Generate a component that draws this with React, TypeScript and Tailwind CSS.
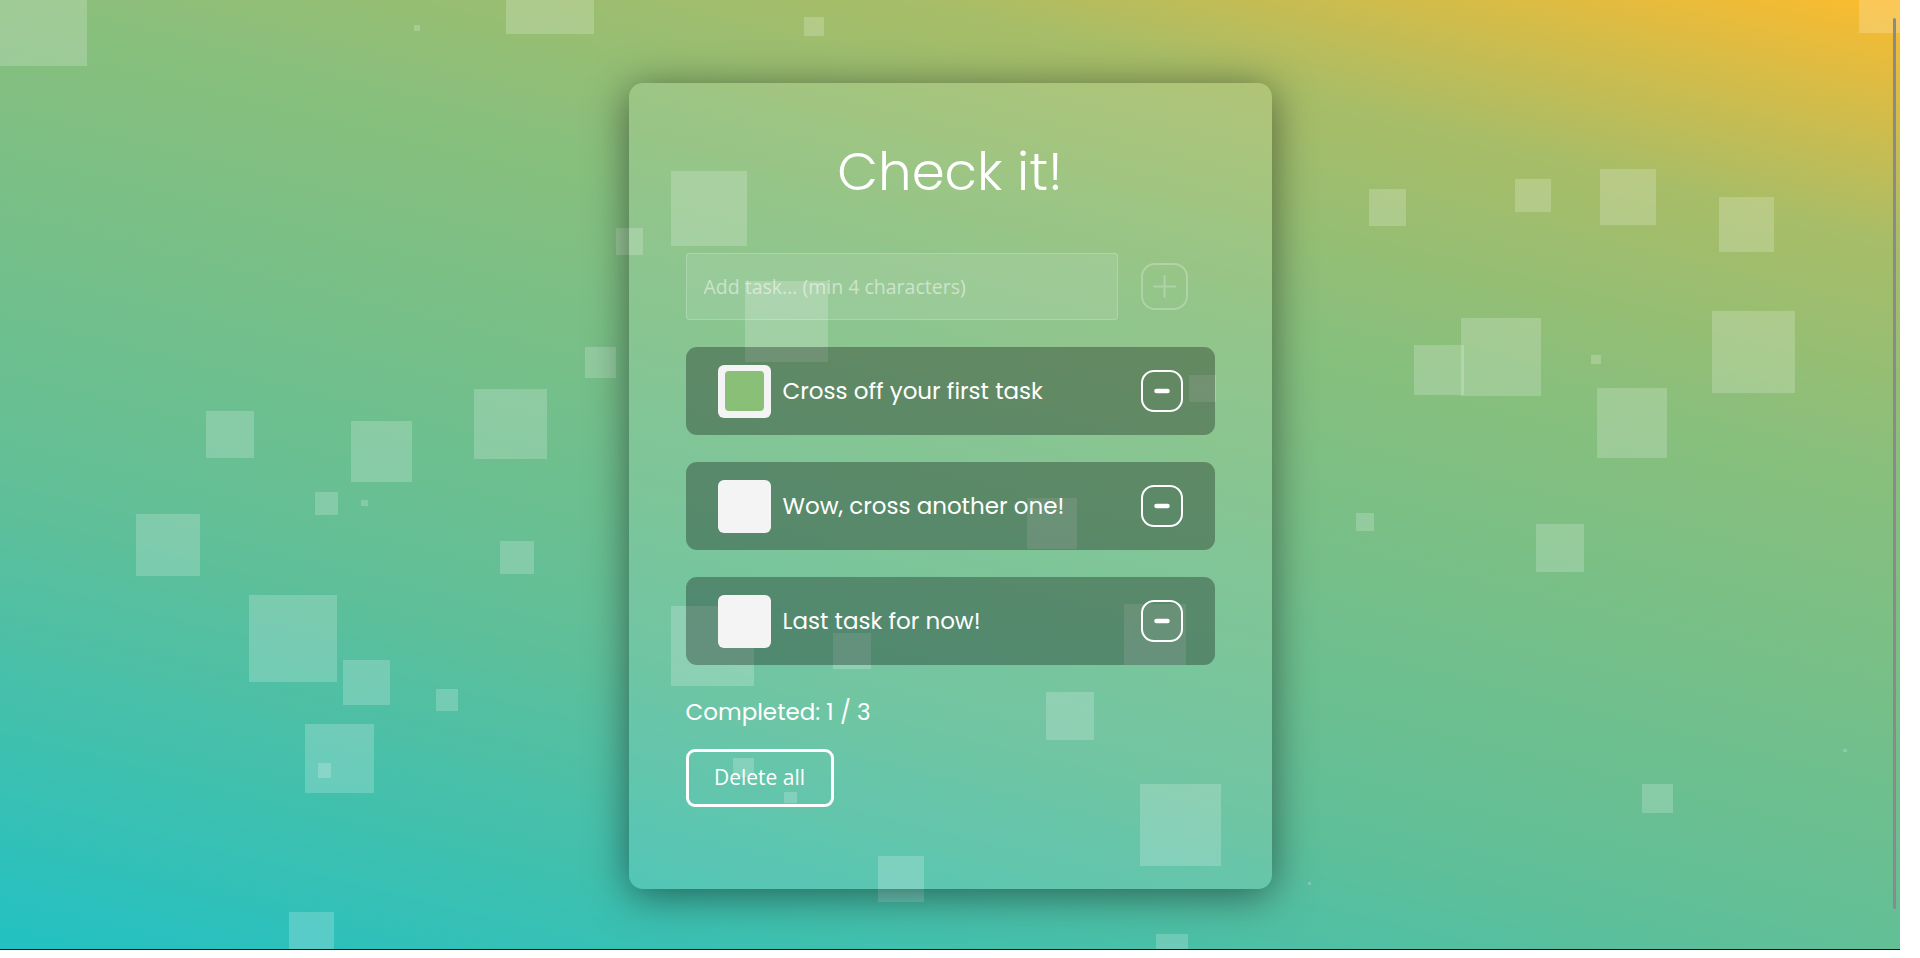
import React, { useState } from "react";

interface Task {
  id: number;
  text: string;
  done: boolean;
}

const initialTasks: Task[] = [
  { id: 1, text: "Cross off your first task", done: true },
  { id: 2, text: "Wow, cross another one!", done: false },
  { id: 3, text: "Last task for now!", done: false },
];

// floating squares in the background: [left, top, width, height]
const squares: [number, number, number, number][] = [
  [0, 0, 87, 66],
  [506, 0, 88, 34],
  [414, 25, 6, 6],
  [804, 17, 20, 19],
  [671, 171, 76, 75],
  [616, 228, 27, 27],
  [745, 281, 83, 81],
  [585, 347, 31, 31],
  [206, 411, 48, 47],
  [351, 421, 61, 61],
  [474, 389, 73, 70],
  [315, 492, 23, 23],
  [361, 500, 7, 6],
  [136, 514, 64, 62],
  [500, 541, 34, 33],
  [249, 595, 88, 87],
  [343, 660, 47, 45],
  [436, 689, 22, 22],
  [305, 724, 69, 69],
  [318, 763, 13, 15],
  [289, 912, 45, 37],
  [671, 606, 83, 80],
  [833, 633, 38, 36],
  [1027, 498, 50, 51],
  [1189, 375, 27, 27],
  [1124, 604, 62, 61],
  [1046, 692, 48, 48],
  [733, 758, 21, 19],
  [784, 792, 13, 11],
  [1140, 784, 81, 82],
  [878, 856, 46, 46],
  [1156, 934, 32, 15],
  [1369, 189, 37, 37],
  [1515, 179, 36, 33],
  [1600, 169, 56, 56],
  [1719, 197, 55, 55],
  [1414, 345, 50, 50],
  [1461, 318, 80, 78],
  [1591, 355, 10, 9],
  [1712, 311, 83, 82],
  [1597, 388, 70, 70],
  [1356, 513, 18, 18],
  [1536, 524, 48, 48],
  [1642, 784, 31, 29],
  [1859, 0, 41, 33],
  [1843, 749, 4, 3],
  [1308, 882, 3, 3],
];

const PlusIcon: React.FC = () => (
  <svg width="47" height="47" viewBox="0 0 47 47" fill="none" stroke="currentColor" strokeWidth="2">
    <rect x="1" y="1" width="45" height="45" rx="13" />
    <path d="M23.5 13v21M13 23.5h21" strokeLinecap="round" />
  </svg>
);

const MinusIcon: React.FC = () => (
  <svg width="42" height="42" viewBox="0 0 42 42" fill="none" stroke="currentColor">
    <rect x="1" y="1" width="40" height="40" rx="12" strokeWidth="2" />
    <path d="M15.5 21h11" strokeWidth="4.5" strokeLinecap="round" />
  </svg>
);

const App: React.FC = () => {
  const [tasks, setTasks] = useState<Task[]>(initialTasks);
  const [draft, setDraft] = useState("");

  const toggle = (id: number): void => {
    setTasks(tasks.map((t) => (t.id === id ? { ...t, done: !t.done } : t)));
  };

  const remove = (id: number): void => {
    setTasks(tasks.filter((t) => t.id !== id));
  };

  const add = (): void => {
    if (draft.trim().length < 4) return;
    setTasks([...tasks, { id: Date.now(), text: draft.trim(), done: false }]);
    setDraft("");
  };

  const completed = tasks.filter((t) => t.done).length;

  return (
    <div className="w-full h-[958px] bg-white overflow-hidden">
      <div className="relative w-[1900px] h-[950px] border-b border-[#161616] overflow-hidden bg-[linear-gradient(14deg,#22c1c3_0%,#62bf97_33%,#89bf7c_67%,#a8bd67_83%,#fdbb2d_100%)] font-['Poppins','Inter',sans-serif] text-white">
        {/* Background squares */}
        <div className="absolute inset-0">
          {squares.map(([x, y, w, h], i) => (
            <div
              key={i}
              className="absolute bg-white/20"
              style={{ left: x, top: y, width: w, height: h }}
            />
          ))}
        </div>

        {/* Card */}
        <div className="relative z-10 mx-auto mt-[83px] w-[643px] h-[806px] rounded-[14px] bg-white/10 shadow-[0_6px_40px_rgba(0,0,0,0.5)] px-[57px] pt-[62px] flex flex-col">
          <h1 className="text-center text-[53px] leading-none font-light">Check it!</h1>

          {/* Add task */}
          <div className="mt-[55px] flex items-center">
            <input
              value={draft}
              onChange={(e) => setDraft(e.target.value)}
              placeholder="Add task... (min 4 characters)"
              className="w-[432px] h-[67px] rounded bg-white/10 border border-white/20 pl-[17px] text-[19.5px] font-['Open_Sans','Noto_Sans',sans-serif] text-white placeholder:text-white/50 outline-none"
            />
            <button onClick={add} className="ml-[23px] text-white/25">
              <PlusIcon />
            </button>
          </div>

          {/* Task list */}
          <ul className="mt-[27px] flex flex-col gap-[27px]">
            {tasks.map((task) => (
              <li
                key={task.id}
                className="h-[88px] rounded-[11px] bg-black/30 px-8 flex items-center"
              >
                <button
                  onClick={() => toggle(task.id)}
                  className="w-[53px] h-[53px] shrink-0 rounded-[6px] bg-[#f4f4f4] flex items-center justify-center"
                >
                  {task.done && (
                    <span className="block w-[39px] h-[40px] rounded-[4px] bg-[#8abf77]" />
                  )}
                </button>
                <span className="ml-[12px] flex-1 text-[23px] leading-none">{task.text}</span>
                <button onClick={() => remove(task.id)} className="text-white">
                  <MinusIcon />
                </button>
              </li>
            ))}
          </ul>

          <p className="mt-[36px] text-[23px] leading-none">
            Completed: {completed} / {tasks.length}
          </p>

          <div className="mt-[25px]">
            <button
              onClick={() => setTasks([])}
              className="w-[148px] h-[58px] rounded-[9px] border-[3px] border-white text-[21px] font-['Open_Sans','Noto_Sans',sans-serif] text-white"
            >
              Delete all
            </button>
          </div>
        </div>

        {/* Scrollbar thumb */}
        <div className="absolute right-[4px] top-[18px] w-[3px] h-[891px] rounded-full bg-[#8a8a8a]" />
      </div>
    </div>
  );
};

export default App;
